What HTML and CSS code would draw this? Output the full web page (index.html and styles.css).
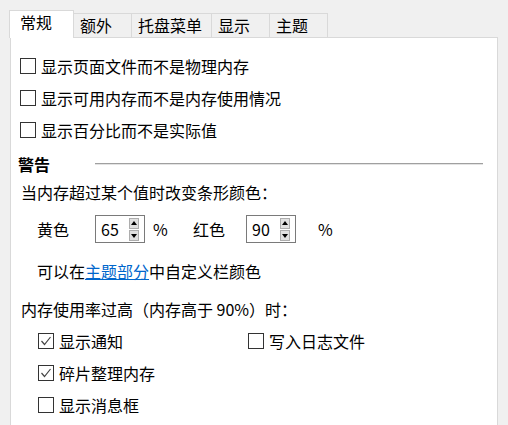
FILE: index.html
```html
<!DOCTYPE html>
<html>
  <head>
    <meta charset="UTF-8">
    <title>常规</title>
    <link rel="stylesheet" href="styles.css">
  </head>
  <body>
    <div class="tabs">
      <span class="tab active">常规</span>
      <span class="tab">额外</span>
      <span class="tab">托盘菜单</span>
      <span class="tab">显示</span>
      <span class="tab">主题</span>
    </div>

    <div class="panel">
      <div class="check-row"><span class="box"></span>显示页面文件而不是物理内存</div>
      <div class="check-row"><span class="box"></span>显示可用内存而不是内存使用情况</div>
      <div class="check-row"><span class="box"></span>显示百分比而不是实际值</div>

      <div class="group-title"><span>警告</span><span class="rule"></span></div>

      <div class="label-line">当内存超过某个值时改变条形颜色：</div>

      <div class="spin-row">
        <span class="spin-label">黄色</span>
        <span class="spinbox">
          <span class="spin-value">65</span>
          <span class="spinner"><span class="spin-btn up"></span><span class="spin-btn down"></span></span>
        </span>
        <span class="pct">%</span>
        <span class="spin-label red">红色</span>
        <span class="spinbox">
          <span class="spin-value">90</span>
          <span class="spinner"><span class="spin-btn up"></span><span class="spin-btn down"></span></span>
        </span>
        <span class="pct wide">%</span>
      </div>

      <div class="hint">可以在<a href="#">主题部分</a>中自定义栏颜色</div>

      <div class="label-line high">内存使用率过高（内存高于 90%）时：</div>

      <div class="check-grid">
        <div class="check-row"><span class="box"><svg width="14" height="14" viewBox="0 0 14 14"><polyline points="2.5,7 5.5,10.5 11.5,3" fill="none" stroke="#444" stroke-width="1.2"/></svg></span>显示通知</div>
        <div class="check-row"><span class="box"></span>写入日志文件</div>
        <div class="check-row"><span class="box"><svg width="14" height="14" viewBox="0 0 14 14"><polyline points="2.5,7 5.5,10.5 11.5,3" fill="none" stroke="#444" stroke-width="1.2"/></svg></span>碎片整理内存</div>
        <div></div>
        <div class="check-row"><span class="box"></span>显示消息框</div>
      </div>
    </div>
  </body>
</html>
```

FILE: styles.css
```css
* {
  box-sizing: border-box;
}

body {
  margin: 0;
  background-color: #f0f0f0;
  font-family: "Noto Sans CJK SC", "Noto Sans", sans-serif;
  font-size: 16px;
  color: #000;
  overflow: hidden;
}

.tabs {
  display: flex;
  align-items: flex-end;
  height: 38px;
  padding: 10px 0 0 9px;
  margin-bottom: -1px;
  position: relative;
  z-index: 1;
}

.tab {
  height: 24px;
  min-width: 59px;
  margin-left: -1px;
  margin-bottom: 1px;
  padding: 0 9px 0 6px;
  border: 1px solid #d9d9d9;
  border-bottom: none;
  line-height: 22px;
  background-color: #f0f0f0;
  white-space: nowrap;
}

.tab.active {
  height: 28px;
  width: 65px;
  margin-left: 0;
  margin-bottom: 0;
  padding-left: 10px;
  line-height: 23px;
  background-color: white;
  position: relative;
  z-index: 2;
}

.panel {
  margin-left: 10px;
  width: 488px;
  height: 389px;
  padding: 12px 14px 0 9px;
  background-color: white;
  border: 1px solid #d9d9d9;
  overflow: hidden;
}

.check-row {
  display: flex;
  align-items: center;
  height: 32px;
  white-space: nowrap;
}

.box {
  display: inline-flex;
  align-items: center;
  justify-content: center;
  width: 16px;
  height: 16px;
  margin-right: 5px;
  border: 1px solid #333;
  background-color: white;
  flex: none;
}

.group-title {
  display: flex;
  align-items: center;
  height: 32px;
  margin: 2px 0 0 -2px;
  font-weight: bold;
}

.rule {
  flex: 1;
  margin-left: 45px;
  border-top: 1px solid #a0a0a0;
  border-bottom: 1px solid #e3e3e3;
}

.label-line {
  height: 24px;
  line-height: 24px;
  margin-left: 1px;
}

.label-line.high {
  margin-top: 10px;
}

.spin-row {
  display: flex;
  align-items: center;
  height: 36px;
  margin: 7px 0 0 17px;
}

.spin-label {
  width: 58px;
}

.spin-label.red {
  width: 53px;
}

.spinbox {
  display: flex;
  align-items: center;
  width: 50px;
  height: 28px;
  padding: 0 5px;
  border: 1px solid #7a7a7a;
}

.spin-value {
  flex: 1;
  line-height: 26px;
}

.spinner {
  display: flex;
  flex-direction: column;
  width: 10px;
}

.spin-btn {
  position: relative;
  height: 11px;
  background-color: #e1e1e1;
  border: 1px solid #adadad;
}

.spin-btn.down {
  margin-top: 1px;
}

.spin-btn::after {
  content: "";
  position: absolute;
  left: 1px;
  border-left: 3px solid transparent;
  border-right: 3px solid transparent;
}

.spin-btn.up::after {
  top: 2px;
  border-bottom: 4px solid #000;
}

.spin-btn.down::after {
  top: 3px;
  border-top: 4px solid #000;
}

.pct {
  width: 40px;
  margin-left: 8px;
}

.pct.wide {
  margin-left: 22px;
}

.hint {
  height: 32px;
  line-height: 32px;
  margin: 8px 0 0 17px;
}

.hint a {
  color: #0066cc;
  text-decoration: underline;
}

.check-grid {
  display: grid;
  grid-template-columns: 210px auto;
  margin-left: 18px;
  margin-top: 4px;
}
```
